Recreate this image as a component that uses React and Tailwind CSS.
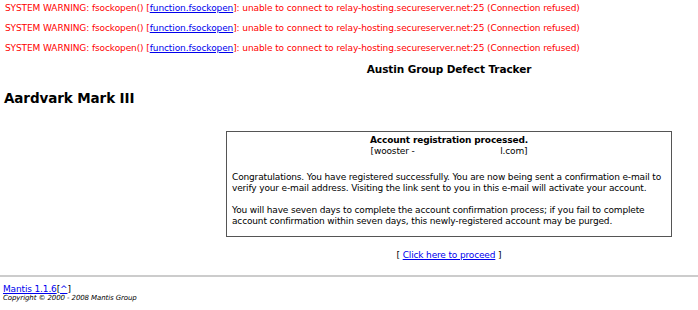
import React from "react";

const warnings = [1, 2, 3];

const Warning = () => (
    <div className="text-[#ff0000] h-[20px] leading-[14px] tracking-[-0.1px]">
        SYSTEM WARNING: fsockopen() [
        <a href="#" className="text-[#0000ee] underline">function.fsockopen</a>
        ]: unable to connect to relay-hosting.secureserver.net:25 (Connection refused)
    </div>
);

const App = () => {
    return (
        <div className="w-full h-[310px] overflow-hidden bg-white">
            <div className="w-[898px] text-[9px] tracking-[-0.15px] text-black" style={{ fontFamily: '"DejaVu Sans", Verdana, sans-serif' }}>
                {/* php warnings */}
                <div className="pl-[5px] pt-[1px]">
                    {warnings.map((w) => (
                        <Warning key={w} />
                    ))}
                </div>

                {/* page title */}
                <div className="text-center font-bold text-[10.5px] tracking-[-0.1px] mt-[1px] leading-[14px]">Austin Group Defect Tracker</div>

                {/* banner */}
                <div className="pl-[4px] mt-[13px] font-bold text-[13.5px] tracking-[-0.1px] leading-[18px]">Aardvark Mark III</div>

                {/* message box */}
                <div className="mt-[24px] flex justify-center">
                    <div className="w-[446px] border border-[#555] px-[5px] pt-[3px] pb-[9px]">
                        <div className="text-center font-bold leading-[11px]">Account registration processed.</div>
                        <div className="text-center leading-[11px]">
                            [wooster - <span className="inline-block w-[83px]"></span>l.com]
                        </div>
                        <p className="mt-[15px] leading-[11px]">
                            Congratulations. You have registered successfully. You are now being sent a confirmation e-mail to verify your e-mail address. Visiting the link sent to you in this e-mail will activate your account.
                        </p>
                        <p className="mt-[11px] leading-[11px]">
                            You will have seven days to complete the account confirmation process; if you fail to complete account confirmation within seven days, this newly-registered account may be purged.
                        </p>
                    </div>
                </div>

                <div className="text-center mt-[12px] leading-[12px]">
                    [ <a href="#" className="text-[#0000ee] underline">Click here to proceed</a> ]
                </div>

                <hr className="mt-[14px] border-0 border-t-2 border-[#cccccc]" />

                <div className="pl-[3px] pt-[7px]">
                    <div className="leading-[10px]">
                        <a href="#" className="text-[#0000ee] underline">Mantis 1.1.6</a>
                        [<a href="#" className="text-[#0000ee] underline">^</a>]
                    </div>
                    <p className="italic text-[7px] tracking-[-0.1px] leading-[9px]">Copyright © 2000 - 2008 Mantis Group</p>
                </div>
            </div>
        </div>
    );
};

export default App;
